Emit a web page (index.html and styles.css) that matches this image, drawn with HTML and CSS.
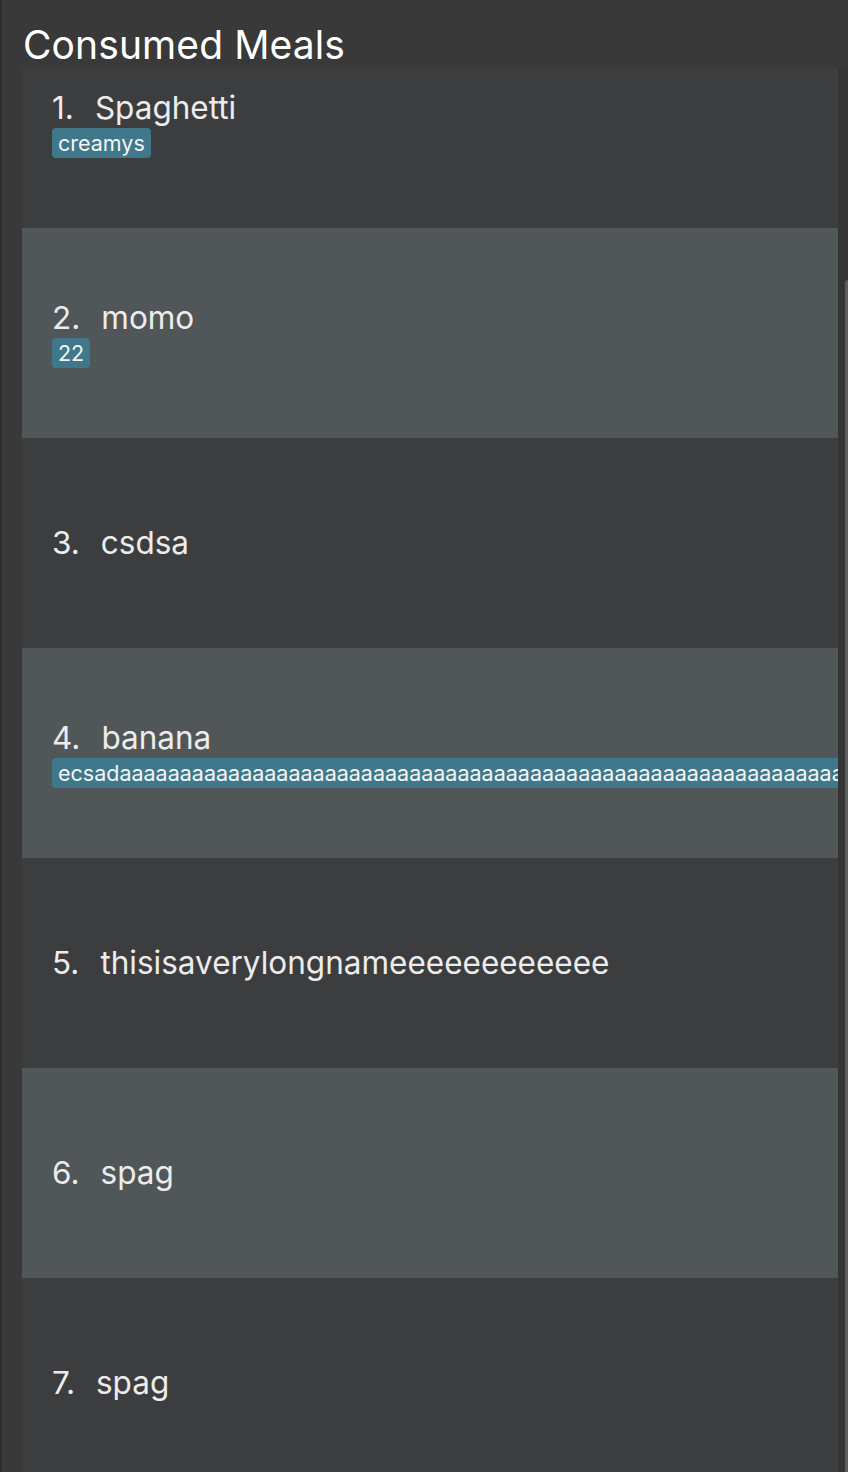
FILE: index.html
```html
<!DOCTYPE html>
<html>
<head>
<meta charset="utf-8">
<link rel="stylesheet" href="styles.css">
</head>
<body>
<div class="page">
  <h1 class="title">Consumed Meals</h1>
  <div class="body-row">
    <div class="list">
      <div class="list-inner">
        <div class="row dark">
          <div class="name"><span class="num">1.</span>Spaghetti</div>
          <div class="tags"><span class="tag">creamys</span></div>
        </div>
        <div class="row light">
          <div class="name"><span class="num">2.</span>momo</div>
          <div class="tags"><span class="tag">22</span></div>
        </div>
        <div class="row dark">
          <div class="name"><span class="num">3.</span>csdsa</div>
        </div>
        <div class="row light">
          <div class="name"><span class="num">4.</span>banana</div>
          <div class="tags"><span class="tag">ecsadaaaaaaaaaaaaaaaaaaaaaaaaaaaaaaaaaaaaaaaaaaaaaaaaaaaaaaaaaaaaaaaaaaaaaaaaaaa</span></div>
        </div>
        <div class="row dark">
          <div class="name"><span class="num">5.</span>thisisaverylongnameeeeeeeeeeee</div>
        </div>
        <div class="row light">
          <div class="name"><span class="num">6.</span>spag</div>
        </div>
        <div class="row dark">
          <div class="name"><span class="num">7.</span>spag</div>
        </div>
      </div>
    </div>
    <div class="scroll-track"><div class="scroll-thumb"></div></div>
  </div>
</div>
</body>
</html>
```
FILE: styles.css
```css
html, body {
  margin: 0;
  padding: 0;
  height: 100%;
}
body {
  background: #393939;
  font-family: Inter, "Noto Sans", sans-serif;
  overflow: hidden;
}
.page {
  height: 1472px;
  border-left: 2px solid #2c2c2c;
  display: flex;
  flex-direction: column;
  box-sizing: border-box;
}
.title {
  margin: 22px 0 0 21px;
  font-size: 39px;
  font-weight: 400;
  line-height: 46px;
  height: 46px;
  color: #ffffff;
  letter-spacing: 0.1px;
}
.body-row {
  flex: 1;
  display: flex;
  min-height: 0;
  margin-left: 20px;
}
.list {
  width: 816px;
  overflow: hidden;
}
.list-inner {
  margin-top: -50px;
}
.row {
  height: 210px;
  box-sizing: border-box;
  padding-left: 30px;
  display: flex;
  flex-direction: column;
  justify-content: center;
  white-space: nowrap;
}
.row.dark { background: #3c3d3f; }
.row.light { background: #515658; }
.name {
  font-size: 31.5px;
  line-height: 40px;
  height: 40px;
  color: #ececec;
}
.num {
  display: inline-block;
  margin-right: 21px;
}
.tags {
  height: 30px;
  display: flex;
}
.tag {
  display: inline-block;
  background: #3f788a;
  color: #f4f4f4;
  font-size: 21.5px;
  line-height: 30px;
  height: 30px;
  padding: 0 6px;
  border-radius: 4px;
}
.scroll-track {
  width: 10px;
  position: relative;
  background: #353535;
}
.scroll-thumb {
  position: absolute;
  left: 7px;
  right: 0;
  top: 212px;
  bottom: 0;
  background: #5e5e5e;
  border-radius: 3px 0 0 0;
}
```
